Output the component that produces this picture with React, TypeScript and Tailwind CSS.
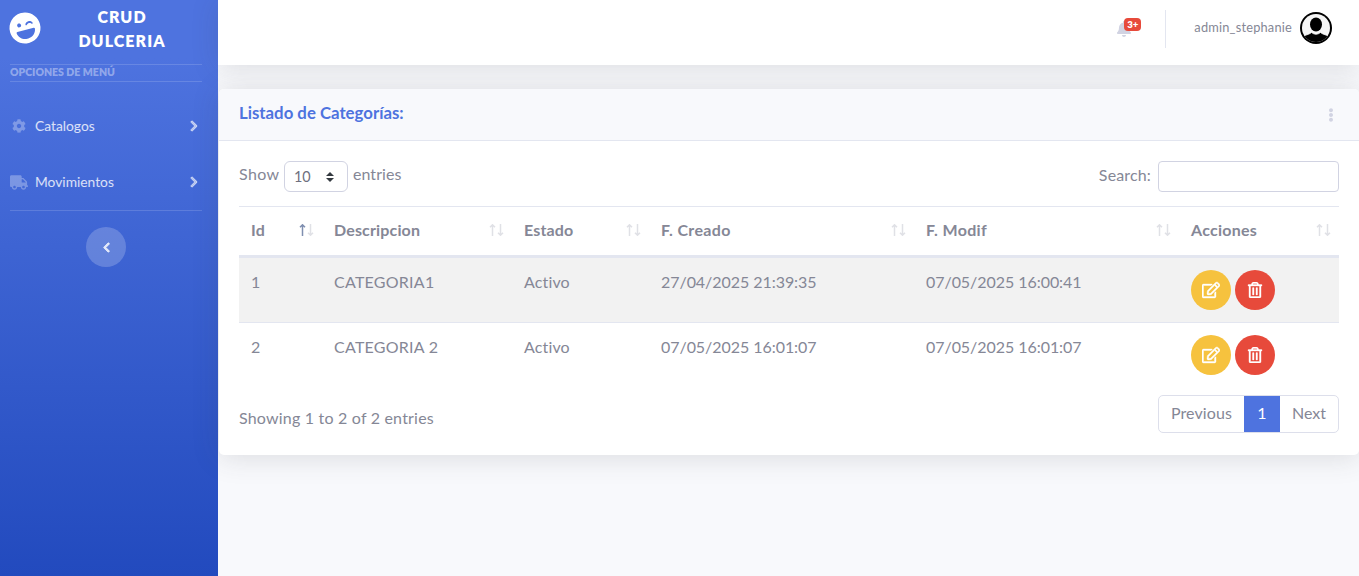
import { FaLaughWink, FaCog, FaTruck, FaChevronRight, FaChevronLeft, FaBell, FaEllipsisV, FaRegEdit, FaRegTrashAlt } from "react-icons/fa";

const font = { fontFamily: "Lato, 'Noto Sans', sans-serif" };

function SortArrows({ active }: { active?: boolean }) {
  return (
    <svg className="absolute right-[7px] top-[17px]" width="16" height="12" viewBox="0 0 16 12" fill="none" strokeWidth="1.5">
      <path d="M3.5 12V.8M1 3.300 3.500.8 6 3.300" stroke={active ? "#7f8fb0" : "#e0e1e6"} />
      <path d="M11.500 0V11.200M9 8.700l2.500 2.500 2.500-2.500" stroke="#e0e1e6" />
    </svg>
  );
}

function Th({ label, w, active, track }: { label: string; w: string; active?: boolean; track?: string }) {
  return (
    <th className={`relative ${w} h-[50px] px-3 pb-[2px] text-left align-middle text-[16px] ${track ?? "tracking-[0.15px]"} font-bold text-[#858796] border-t border-[#e3e6f0] border-b-[3px] border-b-[#e3e6f0]`}>
      {label}
      <SortArrows active={active} />
    </th>
  );
}

function Row({ id, d, c, m, striped }: { id: string; d: string; c: string; m: string; striped?: boolean }) {
  const td = "px-3 pt-[12px] align-top";
  return (
    <tr className={`h-[66px] border-b border-[#e3e6f0] last:border-b-0 ${striped ? "bg-[#f2f2f2]" : ""}`}>
      <td className={td}>{id}</td>
      <td className={`${td} tracking-[0.25px]`}>{d}</td>
      <td className={`${td} tracking-[0.15px]`}>Activo</td>
      <td className={`${td} tracking-[-0.05px]`}>{c}</td>
      <td className={`${td} tracking-[-0.05px]`}>{m}</td>
      <td className="px-3 pt-3 align-top">
        <div className="flex gap-1">
          <span className="flex h-10 w-10 items-center justify-center rounded-full bg-[#f6c23e] text-white text-[18px]"><FaRegEdit stroke="currentColor" strokeWidth={12} /></span>
          <span className="flex h-10 w-10 items-center justify-center rounded-full bg-[#e74a3b] text-white text-[16px]"><FaRegTrashAlt stroke="currentColor" strokeWidth={12} /></span>
        </div>
      </td>
    </tr>
  );
}

function Avatar() {
  return (
    <svg className="mr-[27px] shrink-0" width="32" height="32" viewBox="0 0 32 32">
      <defs>
        <clipPath id="avatar-inner"><circle cx="16" cy="16" r="14" /></clipPath>
      </defs>
      <circle cx="16" cy="16" r="16" fill="#000" />
      <circle cx="16" cy="16" r="14" fill="#f5f5f5" />
      <g clipPath="url(#avatar-inner)">
        <ellipse cx="16" cy="12.5" rx="6" ry="7" fill="#000" />
        <path d="M0 32V24.5C5 23.5 9 22.5 11.5 20.5Q16 24 20.500 20.500C23 22.500 27 23.500 32 24.500V32Z" fill="#000" stroke="#fff" strokeWidth="0.8" />
      </g>
    </svg>
  );
}

export default function App() {
  return (
    <div className="flex h-[576px] w-[1359px] overflow-hidden bg-[#f8f9fc] text-[16px] text-[#858796]" style={font}>
      <aside className="flex w-[218px] shrink-0 flex-col bg-[linear-gradient(180deg,#4e73df_10%,#224abe_100%)] px-[10px] text-white">
        <div className="flex h-[64px] items-start shrink-0 pt-[5px]">
          <FaLaughWink className="-rotate-[15deg] text-[32px] shrink-0 -ml-px mt-[7px]" />
          <div className="flex-1 text-center text-[16px] font-extrabold leading-[24px] tracking-[1.05px] pr-[5px]">CRUD<br />DULCERIA</div>
        </div>
        <div className="h-[18px] border-y border-white/15 text-[10.5px] font-extrabold leading-[15px] uppercase text-white/40 mr-[6px]">Opciones de menú</div>
        <div className="mt-[16px] flex h-[56px] items-center text-[13.8px] text-white/80">
          <FaCog className="w-[14px] text-[14px] mx-[2px] text-white/30" />
          <span className="ml-[7px] flex-1">Catalogos</span>
          <FaChevronRight className="text-[12px] text-white/60 mr-[8px]" stroke="currentColor" strokeWidth={40} />
        </div>
        <div className="flex h-[56px] items-center text-[13.8px] text-white/80">
          <FaTruck className="text-[17px] text-white/30 w-[18px]" />
          <span className="ml-[7px] flex-1">Movimientos</span>
          <FaChevronRight className="text-[12px] text-white/60 mr-[8px]" stroke="currentColor" strokeWidth={40} />
        </div>
        <div className="border-t border-white/15 mr-[6px]" />
        <button className="mx-auto mt-[16px] flex h-10 w-10 items-center justify-center rounded-full bg-white/20 -translate-x-[3px]">
          <FaChevronLeft className="text-[11px] text-white/80" stroke="currentColor" strokeWidth={40} />
        </button>
      </aside>
      <main className="flex min-w-0 flex-1 flex-col">
        <header className="flex h-[65px] shrink-0 items-start justify-end bg-white pt-[10px] shadow-[0_2.4px_28px_0_rgba(58,59,69,0.15)]">
          <div className="relative mr-[33px] mt-[11px] text-[#d1d3e2] text-[16px]">
            <FaBell />
            <span className="absolute -right-[9px] -top-[3px] rounded-[4px] bg-[#e74a3b] px-[3px] text-[9.6px] leading-[13px] font-extrabold text-white">3+</span>
          </div>
          <div className="h-[38px] border-l border-[#e3e6f0] mr-[28px]" />
          <span className="text-[12.8px] leading-[20px] mt-[7px] tracking-[0.2px] text-[#858796] mr-[8px]">admin_stephanie</span>
          <div className="mt-[2px]"><Avatar /></div>
        </header>
        <section className="ml-px mt-6 h-[366px] rounded-[5px] bg-white shadow-[0_2.4px_28px_0_rgba(58,59,69,0.15)]">
          <div className="flex h-[52px] items-center justify-between rounded-t-[5px] border-b border-[#e3e6f0] bg-[#f8f9fc] px-5 pb-[3px]">
            <h6 className="text-[16.8px] font-bold text-[#4e73df]">Listado de Categorías:</h6>
            <FaEllipsisV className="text-[14px] text-[#d1d3e2] mr-[1px] mt-[3px]" />
          </div>
          <div className="px-5 pt-5">
            <div className="flex h-[45px] items-start justify-between">
              <div className="flex items-start">
                <span className="w-[45px] leading-[26px] tracking-[0.4px]">Show</span>
                <span className="relative flex h-[31px] w-16 items-center rounded-[6px] border border-[#d1d3e2] pl-[9px] text-[14.4px] text-[#6e707e]">
                  10
                  <svg className="absolute right-[13px] top-[10px]" width="8" height="10" viewBox="0 0 8 10" fill="#343a40"><path d="M4 0 8 4H0zM4 10 0 6h8z" /></svg>
                </span>
                <span className="ml-[5px] leading-[26px] tracking-[0.05px]">entries</span>
              </div>
              <div className="flex items-start gap-[7px]">
                <span className="leading-[28px] tracking-[0.15px]">Search:</span>
                <span className="h-[31px] w-[181px] rounded-[4px] border border-[#d1d3e2]" />
              </div>
            </div>
            <table className="w-[1100px] table-fixed border-collapse">
              <thead>
                <tr>
                  <Th label="Id" w="w-[83px]" active />
                  <Th label="Descripcion" w="w-[190px]" />
                  <Th label="Estado" w="w-[137px]" />
                  <Th label="F. Creado" w="w-[265px]" track="tracking-[0.35px]" />
                  <Th label="F. Modif" w="w-[265px]" track="tracking-[0.35px]" />
                  <Th label="Acciones" w="w-[160px]" track="tracking-[0.25px]" />
                </tr>
              </thead>
              <tbody>
                <Row id="1" d="CATEGORIA1" c="27/04/2025 21:39:35" m="07/05/2025 16:00:41" striped />
                <Row id="2" d="CATEGORIA 2" c="07/05/2025 16:01:07" m="07/05/2025 16:01:07" />
              </tbody>
            </table>
            <div className="mt-[6px] flex items-start justify-between">
              <span className="mt-[11px] tracking-[0.2px]">Showing 1 to 2 of 2 entries</span>
              <div className="flex h-[38px] overflow-hidden rounded-[5px] border border-[#dddfeb]">
                <span className="flex w-[85px] items-center justify-center pb-px tracking-[0.1px]">Previous</span>
                <span className="flex w-[36px] items-center justify-center bg-[#4e73df] text-white pb-px">1</span>
                <span className="flex w-[58px] items-center justify-center pb-px">Next</span>
              </div>
            </div>
          </div>
        </section>
      </main>
    </div>
  );
}
